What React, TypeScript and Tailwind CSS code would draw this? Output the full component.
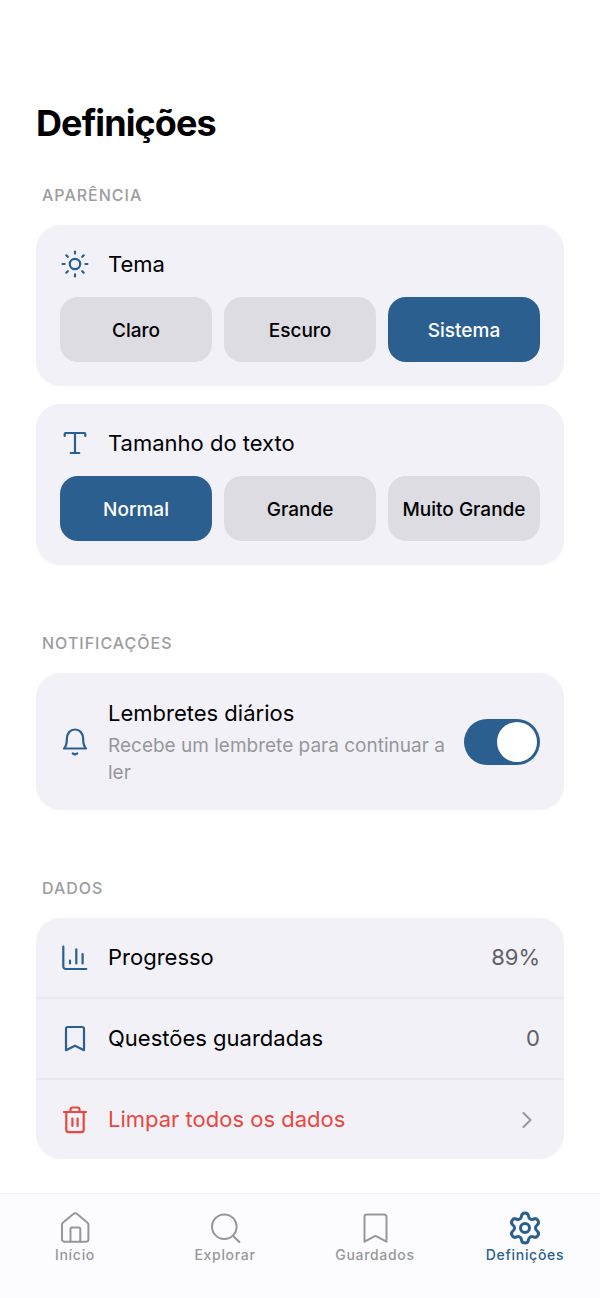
import { useState, type ReactNode } from "react";
import { Settings } from "lucide-react";
import clsx from "clsx";

const THEMES = ["Claro", "Escuro", "Sistema"];
const TEXT_SIZES = ["Normal", "Grande", "Muito Grande"];

function Icon(props: { children: ReactNode }) {
    return (
        <svg
            viewBox="0 0 30 30"
            fill="none"
            stroke="currentColor"
            strokeWidth={2.2}
            strokeLinecap="round"
            strokeLinejoin="round"
            className="size-[30px] shrink-0"
            aria-hidden="true"
        >
            {props.children}
        </svg>
    );
}

function TabIcon(props: { children: ReactNode }) {
    return (
        <svg
            viewBox="0 0 36 36"
            fill="none"
            stroke="currentColor"
            strokeWidth={2}
            strokeLinecap="round"
            strokeLinejoin="round"
            className="size-9"
            aria-hidden="true"
        >
            {props.children}
        </svg>
    );
}

const SunIcon = () => (
    <Icon>
        <circle cx="15" cy="15" r="5.2" />
        <path d="M15 2.6v2M15 25.4v2M2.6 15h2M25.4 15h2M6.3 6.3l1.5 1.5M22.2 22.2l1.5 1.5M6.3 23.7l1.5-1.5M22.2 7.8l1.5-1.5" />
    </Icon>
);

const TypeIcon = () => (
    <Icon>
        <path d="M4.7 8V6a1 1 0 0 1 1-1h18.6a1 1 0 0 1 1 1v2M15 5v20M10.7 25h8.6" />
    </Icon>
);

const BellIcon = () => (
    <Icon>
        <path d="M4 21.5h22c-2-2-2.8-5-2.8-9C23.2 6 19.5 2.5 15 2.5S6.800 6 6.800 12.5c0 4-.8 7-2.8 9Z" />
        <path d="M12.8 26.4q2.2 1.8 4.4 0" />
    </Icon>
);

const ChartIcon = () => (
    <Icon>
        <path d="M3.3 3.5v20a2.5 2.5 0 0 0 2.5 2.5h20.5M10 17.5v3M16.3 6.3v14.2M22.6 11v9.5" />
    </Icon>
);

const BookmarkIcon = () => (
    <Icon>
        <path d="M6 5a2 2 0 0 1 2-2h14a2 2 0 0 1 2 2v21.2l-9-4.5-9 4.5Z" />
    </Icon>
);

const TrashIcon = () => (
    <Icon>
        <path d="M4 7h22M6.3 7v17.7a2.5 2.5 0 0 0 2.5 2.5h12.4a2.5 2.5 0 0 0 2.5-2.500V7M10.5 7V4.5a2 2 0 0 1 2-2h5a2 2 0 0 1 2 2V7M12.4 13.5v7.5M17.6 13.5v7.5" />
    </Icon>
);

function Section(props: { title: string; children: ReactNode }) {
    return (
        <section>
            <h2 className="mb-[18px] px-1.5 text-base leading-6 font-medium tracking-[1px] text-[#9c9ca0] uppercase">
                {props.title}
            </h2>
            {props.children}
        </section>
    );
}

function OptionCard(props: {
    icon: ReactNode;
    title: string;
    options: string[];
    value: string;
    onChange: (value: string) => void;
}) {
    return (
        <div className="rounded-3xl bg-[#f2f1f8] p-6">
            <div className="flex items-center gap-[18px] text-[#2a5f8f]">
                {props.icon}
                <h3 className="text-[22px] leading-[30px] text-black">{props.title}</h3>
            </div>
            <div className="mt-[18px] grid grid-cols-3 gap-3">
                {props.options.map((option) => (
                    <button
                        key={option}
                        type="button"
                        aria-pressed={option === props.value}
                        onClick={() => props.onChange(option)}
                        className={clsx(
                            "h-[65px] rounded-[18px] pt-[3px] text-[19px] font-medium whitespace-nowrap",
                            option === props.value ? "bg-[#2a5f8f] text-white" : "bg-[#dddce2] text-black"
                        )}
                    >
                        {option}
                    </button>
                ))}
            </div>
        </div>
    );
}

function DataRow(props: { icon: ReactNode; label: string; value: string }) {
    return (
        <div className="flex items-center gap-[18px] p-6 text-[#2a5f8f]">
            {props.icon}
            <span className="flex-1 text-black">{props.label}</span>
            <span className="text-[#606064]">{props.value}</span>
        </div>
    );
}

function Tab(props: { label: string; href: string; active?: boolean; children: ReactNode }) {
    return (
        <a
            href={props.href}
            aria-current={props.active ? "page" : undefined}
            className={clsx(
                "flex flex-1 flex-col items-center text-sm leading-[18px] font-medium tracking-wider",
                props.active ? "text-[#2a5f8f]" : "text-[#97979b]"
            )}
        >
            {props.children}
            {props.label}
        </a>
    );
}

export default function App() {
    const [theme, setTheme] = useState("Sistema");
    const [textSize, setTextSize] = useState("Normal");
    const [reminders, setReminders] = useState(true);

    return (
        <div className="flex min-h-screen flex-col bg-white font-['Inter',sans-serif] text-black">
            <main className="flex-1 px-9 pt-[99px] pb-8">
                <h1 className="text-4xl leading-[48px] font-bold tracking-tight">Definições</h1>

                <div className="mt-9 flex flex-col gap-[66px]">
                    <Section title="Aparência">
                        <div className="flex flex-col gap-[18px]">
                            <OptionCard icon={<SunIcon />} title="Tema" options={THEMES} value={theme} onChange={setTheme} />
                            <OptionCard
                                icon={<TypeIcon />}
                                title="Tamanho do texto"
                                options={TEXT_SIZES}
                                value={textSize}
                                onChange={setTextSize}
                            />
                        </div>
                    </Section>

                    <Section title="Notificações">
                        <div className="flex items-center rounded-3xl bg-[#f2f1f8] p-6 text-[#2a5f8f]">
                            <BellIcon />
                            <div className="mr-3 ml-[18px] flex-1">
                                <label htmlFor="reminders" className="mb-[3px] block text-[22px] leading-8 text-black">
                                    Lembretes diários
                                </label>
                                <p id="reminders-hint" className="text-[19px] leading-[27px] text-[#97979b]">
                                    Recebe um lembrete para continuar a ler
                                </p>
                            </div>
                            <input
                                id="reminders"
                                type="checkbox"
                                role="switch"
                                aria-describedby="reminders-hint"
                                checked={reminders}
                                onChange={(e) => setReminders(e.target.checked)}
                                className="flex h-[46px] w-[76px] shrink-0 appearance-none items-center rounded-full bg-[#dddce2] px-[3px] before:size-10 before:rounded-full before:bg-white checked:justify-end checked:bg-[#2a5f8f]"
                            />
                        </div>
                    </Section>

                    <Section title="Dados">
                        <div className="divide-y-2 divide-[#eae9f0] rounded-3xl bg-[#f2f1f8] text-[22px] leading-[31px]">
                            <DataRow icon={<ChartIcon />} label="Progresso" value="89%" />
                            <DataRow icon={<BookmarkIcon />} label="Questões guardadas" value="0" />
                            <button type="button" className="flex w-full items-center gap-[18px] p-6 text-left text-[#e9483f]">
                                <TrashIcon />
                                <span className="flex-1">Limpar todos os dados</span>
                                <svg
                                    viewBox="0 0 26 26"
                                    fill="none"
                                    stroke="currentColor"
                                    strokeWidth={2}
                                    strokeLinecap="round"
                                    strokeLinejoin="round"
                                    className="size-[26px] text-[#97979b]"
                                    aria-hidden="true"
                                >
                                    <path d="m9.500 6 7 7-7 7" />
                                </svg>
                            </button>
                        </div>
                    </Section>
                </div>
            </main>

            <nav className="sticky bottom-0 flex border-t border-[#efeff1] bg-[#fcfcfe] pt-4 pb-[34px]">
                <Tab label="Início" href="#inicio">
                    <TabIcon>
                        <path d="M5 14.800a3 3 0 0 1 1.100-2.300l10.200-8.400a3 3 0 0 1 3.800 0l10.200 8.400a3 3 0 0 1 1.100 2.300v14.400a2.600 2.600 0 0 1-2.600 2.600H7.600a2.600 2.600 0 0 1-2.600-2.600Z" />
                        <path d="M13.500 31.800V19a1.500 1.500 0 0 1 1.500-1.500h6.800a1.500 1.500 0 0 1 1.500 1.500v12.800" />
                    </TabIcon>
                </Tab>
                <Tab label="Explorar" href="#explorar">
                    <TabIcon>
                        <circle cx="17.3" cy="16.7" r="12.3" />
                        <path d="m26 25.700 6.300 6.300" />
                    </TabIcon>
                </Tab>
                <Tab label="Guardados" href="#guardados">
                    <TabIcon>
                        <path d="M7.500 6.800a2.300 2.300 0 0 1 2.300-2.300h17.400a2.300 2.300 0 0 1 2.300 2.300v24.900l-11-5.900-11 5.900Z" />
                    </TabIcon>
                </Tab>
                <Tab label="Definições" href="#definicoes" active>
                    <Settings className="size-9" strokeWidth={2} />
                </Tab>
            </nav>
        </div>
    );
}
